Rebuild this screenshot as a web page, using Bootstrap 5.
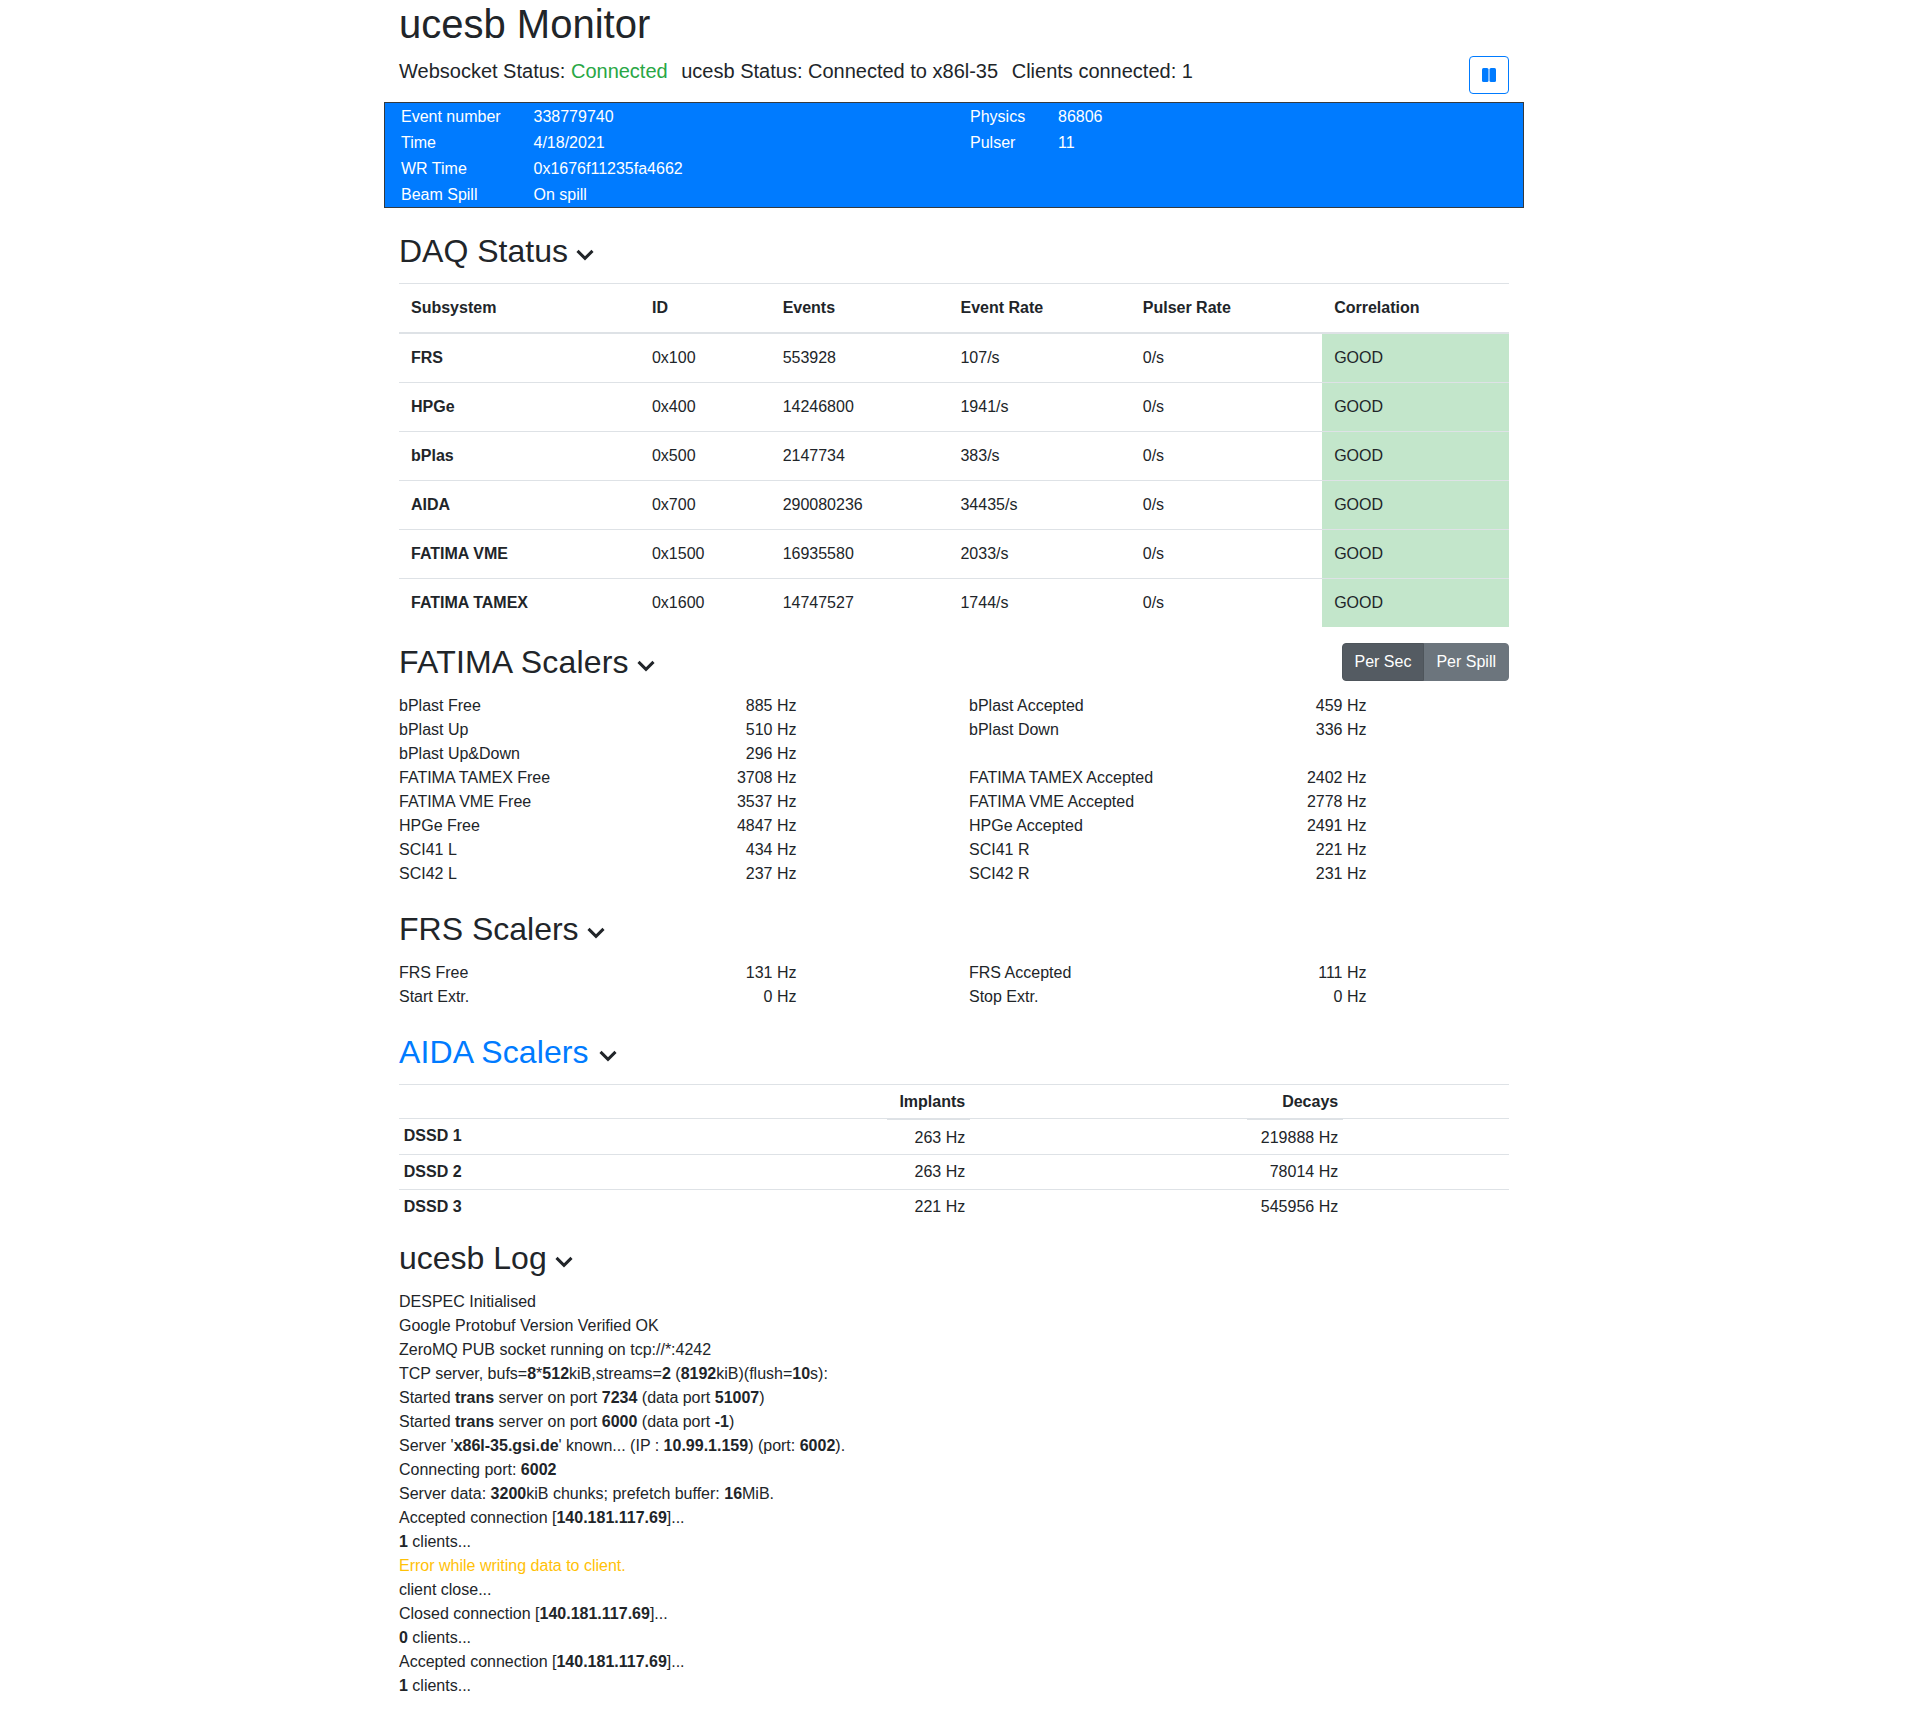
<!DOCTYPE html>
<html lang="en">
  <head>
    <meta charset="UTF-8" />
    <meta name="viewport" content="width=device-width, initial-scale=1.0" />
    <title>ucesb Monitor</title>
    <link
      href="https://cdn.jsdelivr.net/npm/bootstrap@5.3.5/dist/css/bootstrap.min.css"
      rel="stylesheet"
    />
    <style>
      body {
        font-family: "Liberation Sans", Arial, sans-serif;
        font-size: 16px;
        line-height: 1.5;
        color: #212529;
      }
      .page-wrap {
        width: 1140px;
        margin: 0 auto;
        padding: 0 15px;
      }
      .page-wrap .row {
        --bs-gutter-x: 30px;
      }
      .page-title {
        font-size: 40px;
        line-height: 48px;
        font-weight: 500;
        margin: 0 0 8px;
      }
      .status-bar {
        height: 46px;
      }
      .status-text {
        font-size: 20px;
        line-height: 30px;
      }
      .status-part {
        margin-right: 8px;
      }
      .conn-ok {
        color: #28a745;
      }
      .pause-btn {
        width: 40px;
        height: 38px;
        padding: 0;
        border: 1px solid #007bff;
        border-radius: 4px;
        background: #fff;
      }
      .pause-btn svg {
        display: block;
        margin: 0 auto;
      }
      .event-box {
        background: #007bff;
        color: #fff;
        border: 1px solid #343a40;
        margin: 0 -15px;
      }
      .event-box .row {
        --bs-gutter-x: 0;
        margin: 0;
      }
      .event-col {
        padding: 0 16px;
      }
      .event-line {
        display: flex;
        height: 26px;
        line-height: 28px;
      }
      .event-key-a {
        width: 132.5px;
      }
      .event-key-b {
        width: 88px;
      }
      .section-head {
        font-size: 32px;
        line-height: 38px;
        font-weight: 500;
        margin: 0;
      }
      .section-head svg {
        margin-left: -2px;
        vertical-align: -2px;
      }
      .fatima-title {
        letter-spacing: 0.2px;
      }
      .head-link {
        color: #007bff;
        letter-spacing: 0.1px;
      }
      .head-daq {
        margin-top: 24px;
        margin-bottom: 13px;
      }
      .daq-table {
        margin: 0;
        border-top: 1px solid #dee2e6;
      }
      .daq-table th,
      .daq-table td {
        padding: 12px;
        border-color: #dee2e6;
        color: #212529;
      }
      .daq-table thead th {
        border-bottom: 2px solid #dee2e6;
      }
      .daq-table tbody tr:last-child td,
      .daq-table tbody tr:last-child th {
        border-bottom: 0;
      }
      .daq-table .cell-good {
        background: #c3e6cb;
        --bs-table-bg-state: #c3e6cb;
      }
      .fatima-head {
        margin-top: 16px;
        margin-bottom: 13px;
      }
      .rate-btn {
        height: 38px;
        font-size: 16px;
        padding: 6px 12px;
        border-radius: 4px;
        color: #fff;
        border: 1px solid #6c757d;
        background: #6c757d;
      }
      .rate-btn.active {
        background: #545b62;
        border-color: #4e555b;
        color: #fff;
      }
      .scaler-line {
        height: 24px;
      }
      .scaler-value {
        text-align: right;
      }
      .head-frs {
        margin-top: 24px;
        margin-bottom: 13px;
      }
      .head-frs svg {
        margin-left: -1px;
      }
      .head-aida {
        margin-top: 24px;
        margin-bottom: 13px;
      }
      .head-aida svg {
        margin-left: 0;
      }
      .aida-table {
        margin: 0;
        border-top: 1px solid #dee2e6;
        table-layout: fixed;
      }
      .aida-table th,
      .aida-table td {
        padding: 4.8px;
        border-color: #dee2e6;
        color: #212529;
      }
      .aida-table thead th {
        padding-bottom: 3.8px;
      }
      .aida-table tbody th {
        vertical-align: top;
      }
      .aida-table tbody tr:first-child td {
        padding-top: 6px;
      }
      .aida-table tbody tr:last-child th,
      .aida-table tbody tr:last-child td {
        border-bottom: 0;
      }
      .aida-table thead th.under {
        border-bottom: 2px solid #dee2e6;
      }
      .w-label {
        width: 488px;
      }
      .w-implants {
        width: 83px;
      }
      .w-gap {
        width: 277px;
      }
      .w-decays {
        width: 96px;
      }
      .head-log {
        margin-top: 15px;
        margin-bottom: 13px;
      }
      .log-warn {
        color: #ffc107;
      }
    </style>
    <script src="https://cdn.jsdelivr.net/npm/bootstrap@5.3.5/dist/js/bootstrap.bundle.min.js"></script>
  </head>
  <body>
    <main class="page-wrap">
      <h1 class="page-title">ucesb Monitor</h1>

      <div class="d-flex justify-content-between align-items-start status-bar">
        <div class="status-text">
          <span class="status-part">Websocket Status: <span class="conn-ok">Connected</span></span>
          <span class="status-part">ucesb Status: Connected to x86l-35</span>
          <span class="status-part">Clients connected: 1</span>
        </div>
        <button class="pause-btn" type="button" aria-label="Pause">
          <svg width="16" height="16" viewBox="0 0 16 16" fill="#007bff">
            <rect x="1" y="1" width="6.5" height="14" rx="1.5" />
            <rect x="8.5" y="1" width="6.5" height="14" rx="1.5" />
          </svg>
        </button>
      </div>

      <div class="event-box">
        <div class="row">
          <div class="col-6 event-col">
            <div class="event-line"><div class="event-key-a">Event number</div><div>338779740</div></div>
            <div class="event-line"><div class="event-key-a">Time</div><div>4/18/2021</div></div>
            <div class="event-line"><div class="event-key-a">WR Time</div><div>0x1676f11235fa4662</div></div>
            <div class="event-line"><div class="event-key-a">Beam Spill</div><div>On spill</div></div>
          </div>
          <div class="col-6 event-col">
            <div class="event-line"><div class="event-key-b">Physics</div><div>86806</div></div>
            <div class="event-line"><div class="event-key-b">Pulser</div><div>11</div></div>
          </div>
        </div>
      </div>

      <h2 class="section-head head-daq">DAQ Status
        <svg width="20" height="20" viewBox="0 0 16 16" fill="none" stroke="#212529" stroke-width="2.4"><path d="M2 5.5l6 6 6-6" /></svg>
      </h2>
      <table class="table daq-table">
        <thead>
          <tr><th>Subsystem</th><th>ID</th><th>Events</th><th>Event Rate</th><th>Pulser Rate</th><th>Correlation</th></tr>
        </thead>
        <tbody>
          <tr><th>FRS</th><td>0x100</td><td>553928</td><td>107/s</td><td>0/s</td><td class="cell-good">GOOD</td></tr>
          <tr><th>HPGe</th><td>0x400</td><td>14246800</td><td>1941/s</td><td>0/s</td><td class="cell-good">GOOD</td></tr>
          <tr><th>bPlas</th><td>0x500</td><td>2147734</td><td>383/s</td><td>0/s</td><td class="cell-good">GOOD</td></tr>
          <tr><th>AIDA</th><td>0x700</td><td>290080236</td><td>34435/s</td><td>0/s</td><td class="cell-good">GOOD</td></tr>
          <tr><th>FATIMA VME</th><td>0x1500</td><td>16935580</td><td>2033/s</td><td>0/s</td><td class="cell-good">GOOD</td></tr>
          <tr><th>FATIMA TAMEX</th><td>0x1600</td><td>14747527</td><td>1744/s</td><td>0/s</td><td class="cell-good">GOOD</td></tr>
        </tbody>
      </table>

      <div class="d-flex justify-content-between align-items-center fatima-head">
        <h2 class="section-head fatima-title">FATIMA Scalers
          <svg width="20" height="20" viewBox="0 0 16 16" fill="none" stroke="#212529" stroke-width="2.4"><path d="M2 5.5l6 6 6-6" /></svg>
        </h2>
        <div class="btn-group" role="group">
          <button type="button" class="btn rate-btn active">Per Sec</button>
          <button type="button" class="btn rate-btn">Per Spill</button>
        </div>
      </div>

      <div id="fatimaRows"></div>

      <h2 class="section-head head-frs">FRS Scalers
        <svg width="20" height="20" viewBox="0 0 16 16" fill="none" stroke="#212529" stroke-width="2.4"><path d="M2 5.5l6 6 6-6" /></svg>
      </h2>
      <div id="frsRows"></div>

      <h2 class="section-head head-aida"><span class="head-link">AIDA Scalers</span>
        <svg width="20" height="20" viewBox="0 0 16 16" fill="none" stroke="#212529" stroke-width="2.4"><path d="M2 5.5l6 6 6-6" /></svg>
      </h2>
      <table class="table aida-table">
        <thead>
          <tr>
            <th class="w-label"></th>
            <th class="w-implants text-end under">Implants</th>
            <th class="w-gap"></th>
            <th class="w-decays text-end under">Decays</th>
            <th></th>
          </tr>
        </thead>
        <tbody>
          <tr><th>DSSD 1</th><td class="text-end">263 Hz</td><td></td><td class="text-end">219888 Hz</td><td></td></tr>
          <tr><th>DSSD 2</th><td class="text-end">263 Hz</td><td></td><td class="text-end">78014 Hz</td><td></td></tr>
          <tr><th>DSSD 3</th><td class="text-end">221 Hz</td><td></td><td class="text-end">545956 Hz</td><td></td></tr>
        </tbody>
      </table>

      <h2 class="section-head head-log">ucesb Log
        <svg width="20" height="20" viewBox="0 0 16 16" fill="none" stroke="#212529" stroke-width="2.4"><path d="M2 5.5l6 6 6-6" /></svg>
      </h2>
      <div>
        <div>DESPEC Initialised</div>
        <div>Google Protobuf Version Verified OK</div>
        <div>ZeroMQ PUB socket running on tcp://*:4242</div>
        <div>TCP server, bufs=<b>8</b>*<b>512</b>kiB,streams=<b>2</b> (<b>8192</b>kiB)(flush=<b>10</b>s):</div>
        <div>Started <b>trans</b> server on port <b>7234</b> (data port <b>51007</b>)</div>
        <div>Started <b>trans</b> server on port <b>6000</b> (data port <b>-1</b>)</div>
        <div>Server '<b>x86l-35.gsi.de</b>' known... (IP : <b>10.99.1.159</b>) (port: <b>6002</b>).</div>
        <div>Connecting port: <b>6002</b></div>
        <div>Server data: <b>3200</b>kiB chunks; prefetch buffer: <b>16</b>MiB.</div>
        <div>Accepted connection [<b>140.181.117.69</b>]...</div>
        <div><b>1</b> clients...</div>
        <div class="log-warn">Error while writing data to client.</div>
        <div>client close...</div>
        <div>Closed connection [<b>140.181.117.69</b>]...</div>
        <div><b>0</b> clients...</div>
        <div>Accepted connection [<b>140.181.117.69</b>]...</div>
        <div><b>1</b> clients...</div>
      </div>
    </main>

    <script>
      const fatimaData = [
        ["bPlast Free", "885 Hz", "bPlast Accepted", "459 Hz"],
        ["bPlast Up", "510 Hz", "bPlast Down", "336 Hz"],
        ["bPlast Up&Down", "296 Hz", "", ""],
        ["FATIMA TAMEX Free", "3708 Hz", "FATIMA TAMEX Accepted", "2402 Hz"],
        ["FATIMA VME Free", "3537 Hz", "FATIMA VME Accepted", "2778 Hz"],
        ["HPGe Free", "4847 Hz", "HPGe Accepted", "2491 Hz"],
        ["SCI41 L", "434 Hz", "SCI41 R", "221 Hz"],
        ["SCI42 L", "237 Hz", "SCI42 R", "231 Hz"],
      ];
      const frsData = [
        ["FRS Free", "131 Hz", "FRS Accepted", "111 Hz"],
        ["Start Extr.", "0 Hz", "Stop Extr.", "0 Hz"],
      ];

      function fillRows(id, data) {
        const holder = document.getElementById(id);
        for (let i = 0; i < data.length; i++) {
          const d = data[i];
          const row = document.createElement("div");
          row.className = "row scaler-line";
          row.innerHTML = `<div class="col-6"><div class="row"><div class="col-6">${d[0].replace("&", "&amp;")}</div><div class="col-3 scaler-value">${d[1]}</div></div></div>
            <div class="col-6"><div class="row"><div class="col-6">${d[2]}</div><div class="col-3 scaler-value">${d[3]}</div></div></div>`;
          holder.appendChild(row);
        }
      }
      fillRows("fatimaRows", fatimaData);
      fillRows("frsRows", frsData);
    </script>
  </body>
</html>
